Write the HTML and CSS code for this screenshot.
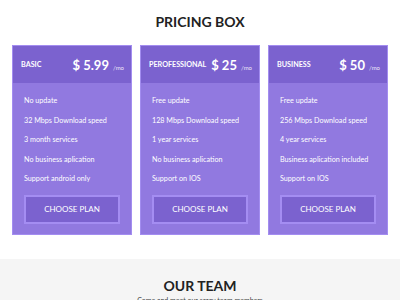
FILE: index.html
```html
<!DOCTYPE html>
<html lang="en">
<head>
  <meta charset="UTF-8" />
  <title>Pricing Box</title>
  <link rel="stylesheet" href="styles.css">
</head>
<body>

  <section class="pricing">
    <h2 class="section-title">PRICING BOX</h2>
    <div class="plan-grid">
      <div class="plan">
        <div class="plan-head">
          <span class="plan-name">BASIC</span>
          <span class="plan-price">$ 5.99 <small>/mo</small></span>
        </div>
        <ul class="plan-features">
          <li>No update</li>
          <li>32 Mbps Download speed</li>
          <li>3 month services</li>
          <li>No business aplication</li>
          <li>Support android only</li>
        </ul>
        <a class="plan-btn" href="#">CHOOSE PLAN</a>
      </div>
      <div class="plan">
        <div class="plan-head">
          <span class="plan-name">PEROFESSIONAL</span>
          <span class="plan-price">$ 25 <small>/mo</small></span>
        </div>
        <ul class="plan-features">
          <li>Free update</li>
          <li>128 Mbps Download speed</li>
          <li>1 year services</li>
          <li>No business aplication</li>
          <li>Support on IOS</li>
        </ul>
        <a class="plan-btn" href="#">CHOOSE PLAN</a>
      </div>
      <div class="plan">
        <div class="plan-head">
          <span class="plan-name">BUSINESS</span>
          <span class="plan-price">$ 50 <small>/mo</small></span>
        </div>
        <ul class="plan-features">
          <li>Free update</li>
          <li>256 Mbps Download speed</li>
          <li>4 year services</li>
          <li>Business aplication included</li>
          <li>Support on IOS</li>
        </ul>
        <a class="plan-btn" href="#">CHOOSE PLAN</a>
      </div>
    </div>
  </section>

  <section class="team">
    <h2 class="section-title">OUR TEAM</h2>
    <p class="team-sub">Come and meet our crazy team members</p>
  </section>

</body>
</html>
```

FILE: styles.css
```css
body {
  margin: 0;
  background: #ffffff;
  font-family: 'Lato', sans-serif;
  color: #222;
}

.pricing {
  padding: 15px 12px 24px;
}

.section-title {
  margin: 0;
  text-align: center;
  font-size: 14px;
  font-weight: 700;
  line-height: 14px;
  color: #222;
}

.plan-grid {
  display: flex;
  gap: 8px;
  margin-top: 16px;
}

.plan {
  width: 120px;
  background: #9179e0;
  border: 1px solid #a38df0;
  box-sizing: border-box;
  color: #fff;
  padding-bottom: 10px;
}

.plan-head {
  height: 37px;
  background: #7b62cf;
  display: flex;
  align-items: center;
  justify-content: space-between;
  gap: 4px;
  padding: 0 7px 0 8px;
  white-space: nowrap;
}

.plan-name {
  font-size: 7.2px;
  font-weight: 700;
}

.plan-price {
  font-size: 13px;
  font-weight: 700;
}

.plan-price small {
  font-size: 6px;
  font-weight: 400;
  margin-left: 1px;
  opacity: 0.85;
}

.plan-features {
  list-style: none;
  margin: 0;
  padding: 8px 11px 0;
}

.plan-features li {
  font-size: 7.2px;
  line-height: 19.6px;
}

.plan-btn {
  display: flex;
  align-items: center;
  justify-content: center;
  height: 29px;
  margin: 6px 11px 0;
  box-sizing: border-box;
  background: #7b62cf;
  border: 2px solid #a48df2;
  color: #fff;
  font-size: 8px;
  text-decoration: none;
}

.team {
  background: #f5f5f5;
  padding: 20px 0 10px;
  text-align: center;
}

.team-sub {
  margin: 3px 0 0;
  font-size: 7px;
  color: #444;
}
```
